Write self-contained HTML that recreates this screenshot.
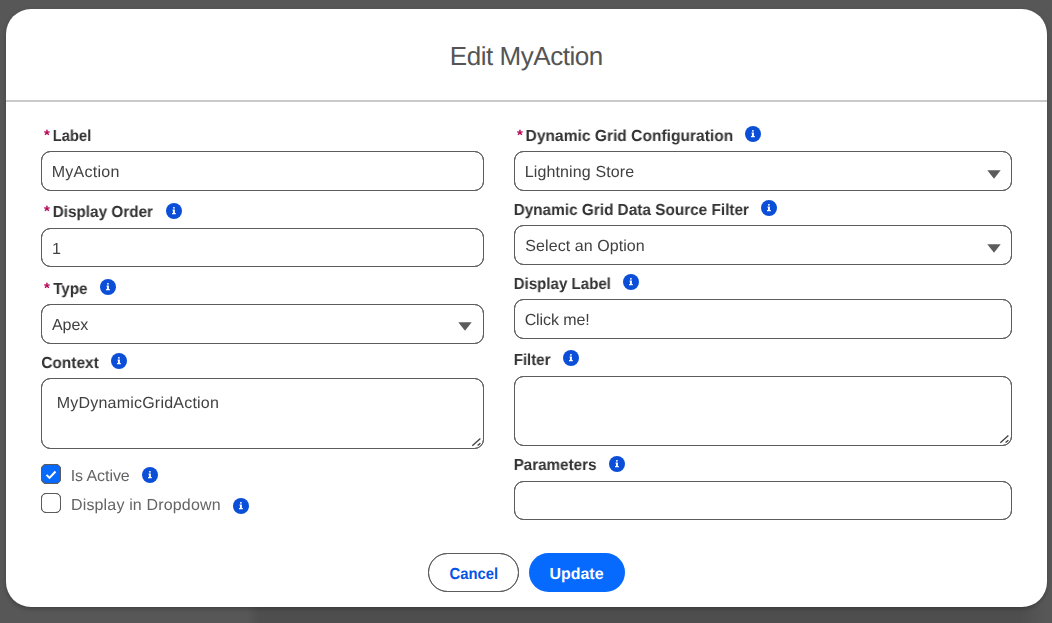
<!DOCTYPE html>
<html lang="en">
<head>
<meta charset="utf-8">
<title>Edit MyAction</title>
<style>
*{box-sizing:border-box;margin:0;padding:0}
html,body{width:1052px;height:623px;overflow:hidden}
body{background:#575757;font-family:"Liberation Sans",sans-serif;position:relative}
.modal{position:absolute;left:6px;top:9px;width:1041px;height:598px;background:#fff;border-radius:25px;box-shadow:0 2px 4px rgba(0,0,0,.25)}
.strip{position:absolute;left:0;top:606px;width:1052px;height:17px;background:linear-gradient(90deg,rgba(78,78,78,0) 247px,#4e4e4e 259px,#4e4e4e 1020px,rgba(78,78,78,0) 1046px)}
.hdr-line{position:absolute;left:6px;top:100px;width:1041px;height:2px;background:#c9c9c9}
.t{position:absolute;white-space:nowrap;line-height:1;transform-origin:0 0;text-rendering:geometricPrecision;will-change:transform}
.t-title{color:#555555;font-weight:400;will-change:auto}
.t-lbl{font-weight:700;color:#333333}
.t-in{color:#414141}
.t-cb{color:#646464}
.t-b1{font-weight:700;color:#0655e4;will-change:auto}
.t-b2{font-weight:700;color:#fff;will-change:auto}
.req{position:absolute;color:#b60554;font-weight:700;font-size:15px;line-height:1;text-rendering:geometricPrecision;will-change:transform}
.box{position:absolute;border:1px solid #5c5c5c;border-radius:9.5px;background:#fff;height:40px}
.box::after{content:"";position:absolute;left:-1px;top:-1px;right:-1px;bottom:-1px;border:1px solid #5c5c5c;border-radius:9.5px}
.info{position:absolute;width:16px;height:16px}
.arrow{position:absolute;width:14px;height:9px}
.cb{position:absolute;width:20px;height:20px;border:1px solid #5c5c5c;border-radius:5px;background:#fff}
.cb.on{background:#066afe}
.cb::after{content:"";position:absolute;left:-1px;top:-1px;right:-1px;bottom:-1px;border:1px solid #5c5c5c;border-radius:5px}
.btn{position:absolute;display:block;height:39px;border-radius:20px;border:0;font:inherit;text-align:left;overflow:visible;appearance:none;-webkit-appearance:none}
.btn.neutral{border:1px solid #5c5c5c;background:#fff}
.btn.brand{background:#066afe}
.btn.neutral::after{content:"";position:absolute;left:-1px;top:-1px;right:-1px;bottom:-1px;border:1px solid #5c5c5c;border-radius:20px}
.grip{position:absolute;width:10px;height:10px}
</style>
</head>
<body>
<svg width="0" height="0" style="position:absolute">
  <defs>
    <symbol id="i" viewBox="0 0 16 16">
      <circle cx="8" cy="8" r="8" fill="#0b4fd8"/>
      <circle cx="7.9" cy="4.85" r="0.95" fill="#fff"/>
      <path d="M6.6 6.5h2.3v3.6h0.9v1.2H6v-1.2h0.95V7.7H6.6z" fill="#fff"/>
    </symbol>
    <symbol id="g" viewBox="0 0 10 10">
      <path d="M9.4 1.6L1.3 8.8M9.4 6.2L6.6 8.6" stroke="#444" stroke-width="1.35" fill="none"/>
    </symbol>
    <symbol id="a" viewBox="0 0 14 9">
      <path d="M0.3 0.3h13.4L7 8.7z" fill="#5c5c5c"/>
    </symbol>
  </defs>
</svg>
<div class="strip"></div>
<div class="modal" role="dialog" aria-modal="true" aria-labelledby="title"></div>
<div class="hdr-line"></div>

<!-- boxes -->
<div class="box" style="left:41px;top:151px;width:443px"></div>
<div class="box" style="left:41px;top:228px;width:443px;height:39px"></div>
<div class="box" style="left:41px;top:304px;width:443px"></div>
<div class="box" style="left:41px;top:378px;width:443px;height:71px"></div>
<div class="box" style="left:514px;top:151px;width:498px"></div>
<div class="box" style="left:514px;top:225px;width:498px"></div>
<div class="box" style="left:514px;top:299px;width:498px"></div>
<div class="box" style="left:514px;top:376px;width:498px;height:70px"></div>
<div class="box" style="left:514px;top:481px;width:498px;height:39px"></div>

<svg class="arrow" style="left:457.5px;top:321.5px"><use href="#a"/></svg>
<svg class="arrow" style="left:986.5px;top:169.5px"><use href="#a"/></svg>
<svg class="arrow" style="left:986.5px;top:243.5px"><use href="#a"/></svg>
<svg class="grip" style="left:471px;top:437px"><use href="#g"/></svg>
<svg class="grip" style="left:999px;top:434px"><use href="#g"/></svg>

<!-- required marks -->
<span class="req" style="left:44.0px;top:128.4px">*</span>
<span class="req" style="left:44.0px;top:204.4px">*</span>
<span class="req" style="left:44.0px;top:281.3px">*</span>
<span class="req" style="left:517.0px;top:128.4px">*</span>

<!-- info icons -->
<svg class="info" style="left:165.9px;top:202.7px"><use href="#i"/></svg>
<svg class="info" style="left:99.9px;top:278.7px"><use href="#i"/></svg>
<svg class="info" style="left:110.8px;top:352.7px"><use href="#i"/></svg>
<svg class="info" style="left:141.8px;top:467.45px"><use href="#i"/></svg>
<svg class="info" style="left:232.5px;top:497.5px"><use href="#i"/></svg>
<svg class="info" style="left:744.8px;top:125.7px"><use href="#i"/></svg>
<svg class="info" style="left:760.8px;top:199.7px"><use href="#i"/></svg>
<svg class="info" style="left:622.8px;top:273.7px"><use href="#i"/></svg>
<svg class="info" style="left:562.8px;top:349.8px"><use href="#i"/></svg>
<svg class="info" style="left:608.7px;top:455.7px"><use href="#i"/></svg>

<!-- checkboxes -->
<div class="cb on" style="left:41px;top:464px"><svg width="18" height="18" viewBox="0 0 18 18" style="position:absolute;left:0;top:0"><path d="M4.5 9.9l3 3l6-6.4" stroke="#fff" stroke-width="2.05" fill="none"/></svg></div>
<div class="cb" style="left:41px;top:493px"></div>

<!-- footer buttons -->
<button type="button" class="btn neutral" style="left:428px;top:553px;width:91px"><span id="b1" class="t t-b1" style="left:20px;top:13px;padding-left:0.51px;font-size:16px;transform:scaleX(0.9249)">Cancel</span></button>
<button type="button" class="btn brand" style="left:529px;top:553px;width:96px"><span id="b2" class="t t-b2" style="left:20px;top:14px;padding-left:0.50px;font-size:16px;transform:scaleX(0.9956)">Update</span></button>

<h1 id="title" class="t t-title" style="left:449px;top:43px;padding-left:0.80px;font-size:26px;letter-spacing:-0.462px">Edit MyAction</h1>
<label id="l1" class="t t-lbl" style="left:52px;top:129px;padding-left:0.64px;font-size:16px;letter-spacing:0.000px;transform:scaleX(0.9262)">Label</label>
<label id="l2" class="t t-lbl" style="left:52px;top:205px;padding-left:0.63px;font-size:16px;letter-spacing:0.000px;transform:scaleX(0.9566)">Display Order</label>
<label id="l3" class="t t-lbl" style="left:53px;top:282px;padding-left:0.17px;font-size:16px;letter-spacing:0.000px;transform:scaleX(0.9469)">Type</label>
<label id="l4" class="t t-lbl" style="left:41px;top:356px;padding-left:0.21px;font-size:16px;letter-spacing:0.000px;transform:scaleX(0.9663)">Context</label>
<label id="r1" class="t t-lbl" style="left:525px;top:129px;padding-left:0.62px;font-size:16px;letter-spacing:0.000px;transform:scaleX(0.9729)">Dynamic Grid Configuration</label>
<label id="r2" class="t t-lbl" style="left:513px;top:203px;padding-left:0.64px;font-size:16px;letter-spacing:0.000px;transform:scaleX(0.9590)">Dynamic Grid Data Source Filter</label>
<label id="r3" class="t t-lbl" style="left:513px;top:277px;padding-left:0.64px;font-size:16px;letter-spacing:0.000px;transform:scaleX(0.9433)">Display Label</label>
<label id="r4" class="t t-lbl" style="left:513px;top:353px;padding-left:0.64px;font-size:16px;letter-spacing:0.000px;transform:scaleX(0.9444)">Filter</label>
<label id="r5" class="t t-lbl" style="left:513px;top:458px;padding-left:0.64px;font-size:16px;letter-spacing:0.000px;transform:scaleX(0.9501)">Parameters</label>
<span id="v1" class="t t-in" style="left:51px;top:165px;padding-left:0.78px;font-size:16px;letter-spacing:0.261px">MyAction</span>
<span id="v2" class="t t-in" style="left:52px;top:242px;padding-left:0.04px;font-size:16px;letter-spacing:0.000px">1</span>
<span id="v3" class="t t-in" style="left:51px;top:318px;padding-left:0.96px;font-size:16px;letter-spacing:-0.055px">Apex</span>
<span id="v4" class="t t-in" style="left:56px;top:396px;padding-left:0.68px;font-size:16px;letter-spacing:0.218px">MyDynamicGridAction</span>
<span id="w1" class="t t-in" style="left:524px;top:165px;padding-left:0.68px;font-size:16px;letter-spacing:0.132px">Lightning Store</span>
<span id="w2" class="t t-in" style="left:525px;top:239px;padding-left:0.37px;font-size:16px;letter-spacing:0.069px">Select an Option</span>
<span id="w3" class="t t-in" style="left:524px;top:313px;padding-left:0.63px;font-size:16px;letter-spacing:-0.093px">Click me!</span>
<label id="c1" class="t t-cb" style="left:70px;top:469px;padding-left:0.71px;font-size:16px;letter-spacing:-0.067px">Is Active</label>
<label id="c2" class="t t-cb" style="left:70px;top:498px;padding-left:0.98px;font-size:16px;letter-spacing:0.158px">Display in Dropdown</label>
</body>
</html>
